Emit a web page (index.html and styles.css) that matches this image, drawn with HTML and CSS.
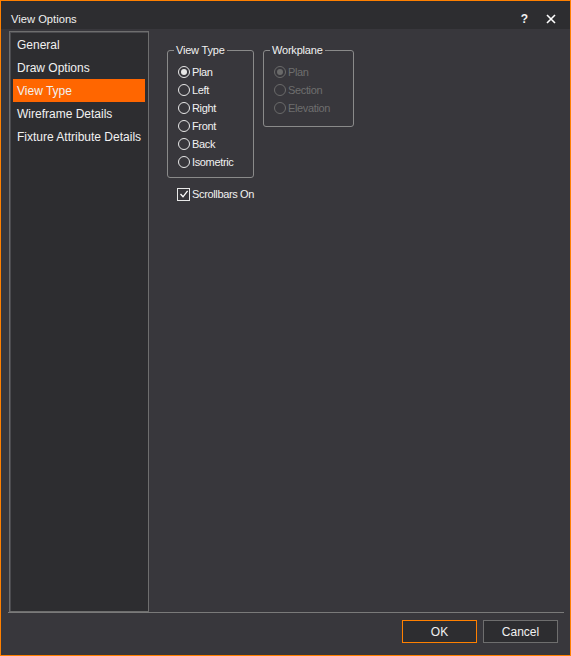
FILE: index.html
```html
<!DOCTYPE html>
<html>
<head>
<meta charset="utf-8">
<link rel="stylesheet" href="styles.css">
</head>
<body>
<div class="dialog">
  <div class="titlebar">
    <span class="title">View Options</span>
    <span class="tb-help">?</span>
    <span class="tb-close"><svg width="10" height="10" viewBox="0 0 10 10"><path d="M1 1L9 9M9 1L1 9" stroke="#ffffff" stroke-width="1.6" fill="none"/></svg></span>
  </div>
  <div class="body">
    <div class="main">
      <div class="nav">
        <div class="nav-item">General</div>
        <div class="nav-item">Draw Options</div>
        <div class="nav-item active">View Type</div>
        <div class="nav-item">Wireframe Details</div>
        <div class="nav-item">Fixture Attribute Details</div>
      </div>
      <div class="panel">
        <div class="groups">
          <fieldset class="group group-view">
            <legend>View Type</legend>
            <div class="opt"><span class="radio checked"></span>Plan</div>
            <div class="opt"><span class="radio"></span>Left</div>
            <div class="opt"><span class="radio"></span>Right</div>
            <div class="opt"><span class="radio"></span>Front</div>
            <div class="opt"><span class="radio"></span>Back</div>
            <div class="opt"><span class="radio"></span>Isometric</div>
          </fieldset>
          <fieldset class="group group-work disabled">
            <legend>Workplane</legend>
            <div class="opt"><span class="radio checked"></span>Plan</div>
            <div class="opt"><span class="radio"></span>Section</div>
            <div class="opt"><span class="radio"></span>Elevation</div>
          </fieldset>
        </div>
        <div class="opt check-row"><span class="checkbox"><svg width="10" height="10" viewBox="0 0 10 10"><path d="M1.5 5L4 7.8L8.6 1.8" stroke="#ffffff" stroke-width="1.3" fill="none"/></svg></span>Scrollbars On</div>
      </div>
    </div>
    <div class="footer">
      <button class="btn btn-ok">OK</button>
      <button class="btn">Cancel</button>
    </div>
  </div>
</div>
</body>
</html>
```
FILE: styles.css
```css
html, body {
  margin: 0;
  padding: 0;
  background: #38373c;
}
.dialog {
  width: 571px;
  height: 656px;
  box-sizing: border-box;
  border: 1px solid #ff8000;
  display: flex;
  flex-direction: column;
  font-family: "Liberation Sans", Arial, sans-serif;
  color: #f1f1f1;
  background: #38373c;
}
.titlebar {
  height: 28px;
  flex: none;
  box-sizing: border-box;
  background: #2d2d30;
  display: flex;
  align-items: center;
  padding: 7px 14px 0 10px;
}
.title {
  font-size: 11.2px;
  flex: 1;
}
.tb-help {
  font-size: 12px;
  font-weight: bold;
  margin-right: 18px;
}
.tb-close {
  display: flex;
  width: 10px;
  height: 10px;
}
.body {
  flex: 1;
  display: flex;
  flex-direction: column;
  padding-top: 2px;
}
.main {
  flex: 1;
  display: flex;
  margin-left: 7px;
  margin-right: 6px;
  border-bottom: 1px solid #7a7a7a;
}
.nav {
  margin-left: 1px;
  width: 140px;
  box-sizing: border-box;
  border: 1px solid #6e6e6e;
  box-shadow: inset 1px 1px 0 #4b4b4f;
  background: #2d2d30;
  padding: 1px 3px 0 3px;
}
.nav-item {
  height: 23px;
  line-height: 25px;
  padding-left: 4px;
  font-size: 12px;
  white-space: nowrap;
}
.nav-item.active {
  background: #ff6600;
}
.panel {
  flex: 1;
  padding: 13px 0 0 18px;
}
.groups {
  display: flex;
  align-items: flex-start;
  gap: 9px;
}
.group {
  margin: 0;
  border: 1px solid #8a8a8a;
  border-radius: 3px;
  padding: 7px 0 0 10px;
  box-sizing: border-box;
}
.group legend {
  font-size: 11px;
  letter-spacing: -0.2px;
  padding: 0 2px;
  margin-left: -4px;
}
.group-view {
  width: 87px;
  height: 134px;
}
.group-work {
  width: 91px;
  height: 83px;
}
.opt {
  display: flex;
  align-items: center;
  height: 18px;
  font-size: 11px;
  letter-spacing: -0.35px;
  white-space: nowrap;
}
.radio {
  width: 10px;
  height: 10px;
  border: 1px solid #e8e8e8;
  border-radius: 50%;
  margin-right: 2px;
  position: relative;
  flex: none;
}
.radio.checked::after {
  content: "";
  position: absolute;
  left: 2px;
  top: 2px;
  width: 6px;
  height: 6px;
  border-radius: 50%;
  background: #e8e8e8;
}
.disabled legend {
  color: #f1f1f1;
}
.disabled .opt {
  color: #6e6e6e;
}
.disabled .radio {
  border-color: #6a6a6a;
}
.disabled .radio.checked::after {
  background: #6a6a6a;
}
.check-row {
  margin-top: 7px;
  margin-left: 10px;
}
.checkbox {
  width: 11px;
  height: 11px;
  border: 1px solid #e8e8e8;
  margin-right: 2px;
  display: flex;
  align-items: center;
  justify-content: center;
  flex: none;
}
.footer {
  height: 42px;
  flex: none;
  display: flex;
  justify-content: flex-end;
  align-items: flex-start;
  gap: 6px;
  padding-top: 7px;
  padding-right: 12px;
  box-sizing: border-box;
}
.btn {
  width: 75px;
  height: 23px;
  background: #2d2d30;
  border: 1px solid #6e6e6e;
  color: #f1f1f1;
  font-family: "Liberation Sans", Arial, sans-serif;
  font-size: 12px;
  padding: 0;
  margin: 0;
}
.btn-ok {
  border-color: #ff8000;
}
```
